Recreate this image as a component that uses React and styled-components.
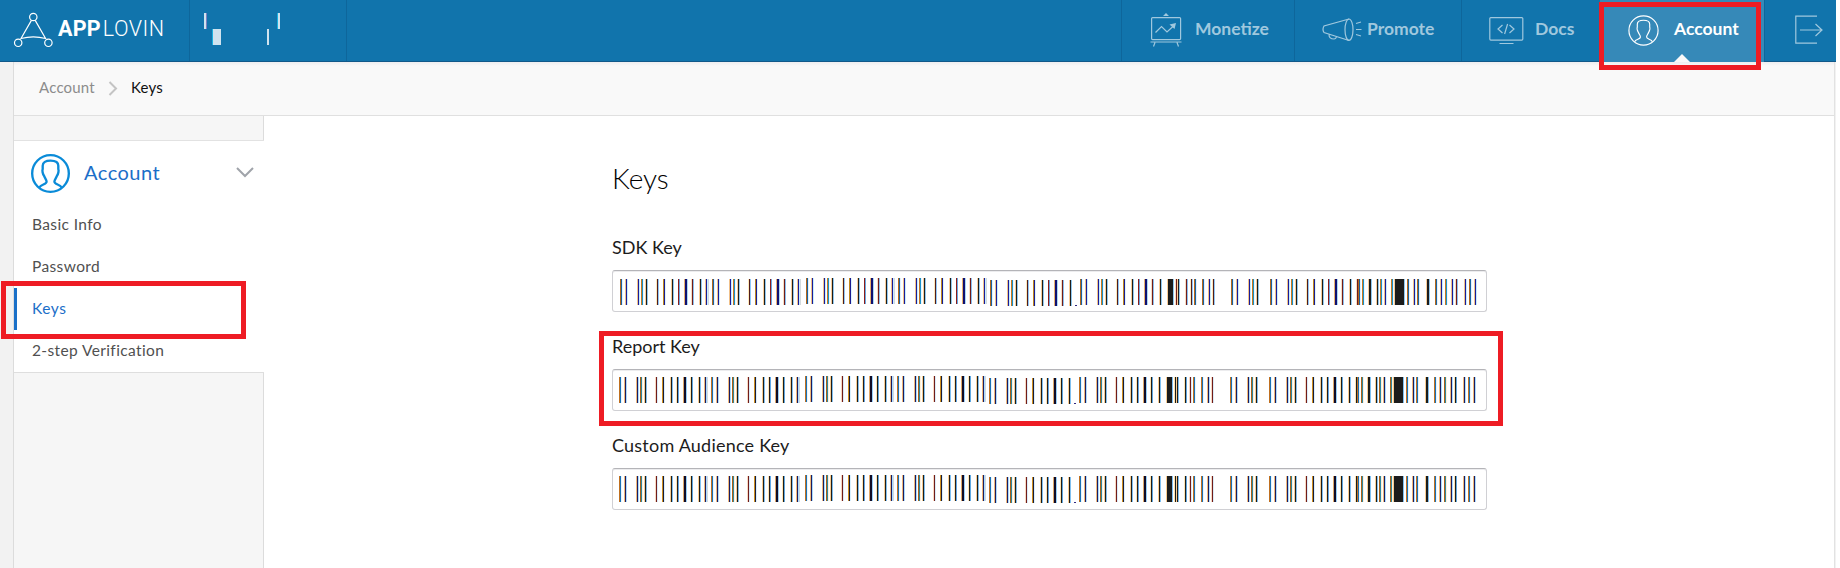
import React from 'react';
import styled, { createGlobalStyle } from 'styled-components';

const GlobalStyle = createGlobalStyle`
  * { box-sizing: border-box; }
  body { margin: 0; background: #fff; font-family: Lato, sans-serif; }
`;

const Page = styled.div`
  position: relative;
  width: 1836px;
  height: 568px;
  overflow: hidden;
  display: flex;
  flex-direction: column;
  background: #f2f2f2;
`;

const TopBar = styled.header`
  display: flex;
  height: 62px;
  flex: none;
  background: #1174ac;
  border-bottom: 1px solid #11598a;
`;

const LogoCell = styled.div`
  width: 190px;
  display: flex;
  align-items: flex-start;
  padding: 12px 0 0 13px;
  border-right: 1px solid #0e669b;
`;

const Wordmark = styled.span`
  font: 300 21.5px/34px Roboto, sans-serif;
  color: #fff;
  margin-left: 5px;
  letter-spacing: 0.5px;
  b { font-weight: 700; letter-spacing: 0.2px; margin-right: 2px; }
`;

const UserCell = styled.div`
  width: 157px;
  padding: 13px 0 0 14px;
  border-right: 1px solid #0e669b;
`;

const Nav = styled.nav`
  display: flex;
  margin-left: auto;
`;

const NavItem = styled.a`
  position: relative;
  display: flex;
  width: ${(p) => p.$w}px;
  height: ${(p) => (p.$active ? 62 : 61)}px;
  padding-left: ${(p) => p.$pad}px;
  border-left: 1px solid ${(p) => (p.$active ? '#3689b8' : '#0e669b')};
  background: ${(p) => (p.$active ? '#3689b8' : 'transparent')};
  color: ${(p) => (p.$active ? '#fff' : '#a0c8de')};
  svg { flex: none; }
`;

const NavLabel = styled.span`
  font-size: 17.5px;
  font-weight: 700;
  line-height: 24px;
  margin: 17px 0 0 ${(p) => p.$gap}px;
  white-space: nowrap;
`;

const Pointer = styled.i`
  position: absolute;
  left: 73px;
  bottom: 0;
  border: 8px solid transparent;
  border-top: 0;
  border-bottom-color: #f9f9f9;
`;

const Avatar = styled.span`
  flex: none;
  height: ${(p) => p.$size}px;
  margin-top: ${(p) => p.$top || 0}px;
  color: ${(p) => p.$color || 'inherit'};
  svg { display: block; }
`;

const Frame = styled.div`
  flex: 1;
  display: flex;
  flex-direction: column;
  margin: 0 1px 0 13px;
  border-left: 1px solid #dcdcdc;
  border-right: 1px solid #e2e2e2;
  background: #fff;
`;

const Breadcrumb = styled.div`
  display: flex;
  align-items: center;
  height: 54px;
  flex: none;
  padding: 0 0 3px 25px;
  background: linear-gradient(#eeeef0, #f9f9f9 4px);
  border-bottom: 1px solid #e0e0e0;
  font-size: 15px;
  line-height: 20px;
  letter-spacing: 0.2px;
  color: #8c8c8c;
  svg { margin: 3px 13px 0 13px; }
  strong { font-weight: 400; color: #111; }
`;

const Body = styled.div`
  flex: 1;
  display: flex;
`;

const Sidebar = styled.aside`
  width: 250px;
  display: flex;
  flex-direction: column;
`;

const Filler = styled.div`
  height: ${(p) => (p.$h ? p.$h + 'px' : 'auto')};
  flex: ${(p) => (p.$h ? 'none' : 1)};
  background: #f6f6f6;
  border-right: 1px solid #dcdcdc;
`;

const Menu = styled.div`
  height: 233px;
  flex: none;
  border-top: 1px solid #e2e2e2;
  border-bottom: 1px solid #dedede;
  background: #fff;
`;

const MenuHead = styled.div`
  display: flex;
  height: 63px;
  padding: 13px 0 0 17px;
  color: #1b6ec8;
  font-size: 20px;
  line-height: 36px;
`;

const MenuTitle = styled.span`
  width: 166px;
  padding-left: 14px;
  letter-spacing: 0.5px;
`;

const MenuItem = styled.a`
  display: block;
  height: 42px;
  line-height: 41px;
  padding-left: ${(p) => (p.$active ? 15 : 18)}px;
  border-left: ${(p) => (p.$active ? '3px solid #1a70c8' : '0')};
  font-size: 15.5px;
  color: ${(p) => (p.$active ? '#1b6ec8' : '#505050')};
  letter-spacing: ${(p) => (p.$active ? 0.6 : 0.38)}px;
`;

const Main = styled.main`
  padding: 42px 0 0 348px;
  width: 1223px;
`;

const Title = styled.h1`
  margin: 0 0 37px;
  font-size: 28px;
  font-weight: 300;
  line-height: 40px;
  color: #000;
`;

const Field = styled.div`
  height: 99px;
`;

const Label = styled.label`
  display: block;
  height: 35px;
  font-size: 18px;
  line-height: 25px;
  color: #1c1c1c;
  letter-spacing: ${(p) => p.$ls || 0}px;
`;

const KeyBox = styled.div`
  height: 42px;
  padding: ${(p) => p.$inset}px 0 0 ${(p) => p.$inset}px;
  border: 1px solid #d0d0d4;
  border-top-color: #b4b4b8;
  border-radius: 3px;
  box-shadow: inset 0 1px 0 #ececee;
  svg { display: block; }
`;

const Highlight = styled.div`
  position: absolute;
  left: ${(p) => p.$x}px;
  top: ${(p) => p.$y}px;
  width: ${(p) => p.$w}px;
  height: ${(p) => p.$h}px;
  border: 5px solid #ee1c24;
`;

// Stripe palettes: [left fringe, core, right fringe]
const PALETTES = {
  warm: {
    o: ['#b5671a', '#1c62a0', '#dff2ff'],
    n: ['#f0c088', '#1c1c98', '#c4ecff'],
    t: ['#c87820', '#1c90c8', '#e8f8ff'],
    k: ['#f8cc98', '#1c1c1c', '#90c8f0'],
    p: ['#ffe8b8', '#501c1c', '#90c8f8'],
    g: ['#c08820', '#1c1c90', '#dcf4ff'],
    r: ['#ffffff', '#8c1c1c', '#68a8e0'],
    m: ['#f8dcc0', '#701c1c', '#88c0f0'],
    w: ['#e8b070', '#101070', '#a8d8f8'],
  },
  cool: {
    o: ['#c07020', '#1c70b4', '#e4f6ff'],
    n: ['#f0b878', '#1c1c60', '#a8dcff'],
    t: ['#a86018', '#3088a0', '#fff0d8'],
    k: ['#f8cc90', '#1c1c1c', '#80c0f0'],
    p: ['#f8d8c0', '#701c1c', '#d8ecf8'],
    g: ['#d09020', '#1c1c38', '#d8f0ff'],
    r: ['#ffe4b0', '#281c1c', '#60a8e8'],
    m: ['#ffe4b0', '#1c1c1c', '#60a8e0'],
    w: ['#e0a868', '#100c28', '#98d0f8'],
  },
};

const GROUP = [[0, 'o'], [5, 'n'], [17, 'n'], [21, 't'], [25, 'k'], [36, 'p'], [43, 'g'], [51, 'k'], [57, 'r'], [64, 'w', 2], [71, 'm'], [79, 'k'], [85, 'n']];
const STARTS = [[0, 1], [92, 1], [186, 0], [278, 0], [370, 2, 12], [460, 1, 12]];
const TAIL = [
  [547, 'k', 5], [555, 'm'], [557, 'k'],
  [565, 'm'], [570, 'p'], [574, 'o'], [582, 'o'], [588, 'n'], [592, 'p'], [611, 'o'], [616, 'n'],
  [628, 'n'], [632, 't'], [636, 'k'], [650, 'o'], [655, 'n'], [667, 'n'], [671, 't'], [675, 'k'],
  [686, 'p'], [693, 'g'], [701, 'k'], [707, 'r'], [714, 'w', 2], [721, 'm'], [729, 'k'],
  [736, 'm'], [738, 'o'], [742, 't'], [748, 'k', 2], [756, 'k'], [760, 't'], [764, 'n'],
  [771, 't'], [774, 'k', 9], [787, 'o'], [793, 'n'], [797, 'o'], [806, 'k', 2], [815, 'o'],
  [820, 'n'], [825, 't'], [831, 'n'], [835, 'm'], [844, 'n'], [849, 'o'], [854, 'n'],
];

function Stripe({ x, y, kind, core = 1, palette }) {
  const [a, b, c] = palette[kind];
  return (
    <g>
      <rect x={x} y={y} width="1" height="26" fill={a} />
      <rect x={x + 1} y={y} width={core} height="26" fill={b} />
      <rect x={x + 1 + core} y={y} width="1" height="26" fill={c} />
    </g>
  );
}

function KeyStripes({ tone }) {
  const palette = PALETTES[tone];
  return (
    <svg width="862" height="29" shapeRendering="crispEdges">
      {STARTS.map(([sx, sy, count = 13]) =>
        GROUP.slice(0, count).map(([x, kind, core]) => (
          <Stripe key={sx + x} x={sx + x} y={sy} kind={kind} core={core} palette={palette} />
        ))
      )}
      {[88, 180, 274, 366].map((x) => (
        <rect key={x} x={x} y={x > 200 ? 0 : 1} width="1" height="26" fill="#d4dade" />
      ))}
      <rect x="455" y="27" width="2" height="1" fill="#302880" />
      {TAIL.map(([x, kind, core]) => (
        <Stripe key={x} x={x} y={1} kind={kind} core={core} palette={palette} />
      ))}
    </svg>
  );
}

const Person = ({ size, sw }) => (
  <svg width={size} height={size} viewBox="0 0 40 40" fill="none" stroke="currentColor" strokeWidth={sw}>
    <circle cx="20" cy="20" r="18.8" />
    <path d="M8.500 34.500C10 31 15.800 31.500 16 28.500C16.100 26.500 14.200 25 13.200 22C12 20.500 11.300 17 12 15.500V12C12 8.500 15 6.800 20 6.800C25 6.800 28 8.500 28 12V15.500C28.700 17 28 20.500 26.800 22C25.800 25 23.900 26.500 24 28.500C24.200 31.500 30 31 31.500 34.500" />
  </svg>
);

const KeyField = ({ label, tone, inset, ls }) => (
  <Field>
    <Label $ls={ls}>{label}</Label>
    <KeyBox $inset={inset}><KeyStripes tone={tone} /></KeyBox>
  </Field>
);

export default function App() {
  return (
    <Page>
      <GlobalStyle />
      <TopBar>
        <LogoCell>
          <svg width="40" height="36" fill="none" stroke="#fff" strokeWidth="1.2">
            <circle cx="20.3" cy="5" r="3.7" />
            <circle cx="5.2" cy="30.8" r="3.7" />
            <circle cx="35.4" cy="30.8" r="3.7" />
            <path d="M18.4 8.400L8 26.500Q20.300 23.400 32.600 26.500L22.200 8.400" />
          </svg>
          <Wordmark><b>APP</b>LOVIN</Wordmark>
        </LogoCell>
        <UserCell>
          <svg width="90" height="34" shapeRendering="crispEdges">
            <path fill="#d0e3ef" d="M0 0h2v16h-2zM9 16h8v16h-8zM74 0h2v16h-2zM63 16h2v16h-2z" />
            <path fill="#7c80c0" d="M2 0h1v16h-1z" />
            <path fill="#18b0e0" d="M8 16h1v16h-1zM73 0h1v16h-1z" />
          </svg>
        </UserCell>
        <Nav>
          <NavItem $w={173} $pad={28}>
            <svg width="32" height="48" fill="none" stroke="currentColor" strokeWidth="1.2">
              <rect x="1.6" y="17.6" width="29" height="22" rx="1" />
              <path d="M0.500 42h31M5 42.500l-1.500 4M27 42.500l1.500 4M5.500 32.500l6-6 5.500 5.500 7-6.500" />
              <path fill="currentColor" stroke="none" d="M13 16l3-3 3 3zM19.500 24.500l6.500-1.500-1.500 6z" />
            </svg>
            <NavLabel $gap={13}>Monetize</NavLabel>
          </NavItem>
          <NavItem $w={167} $pad={26}>
            <svg width="42" height="48" fill="none" stroke="currentColor" strokeWidth="1.2">
              <path d="M28 19L3 26Q1 29.500 3 32.500L28 40.500M8 34.500q0 4.500 5 4.500q2 0 2.500-2.500M35 23.500l5-1.500M35 29.500h5.500M35 34.500l5 1.500" />
              <ellipse cx="28" cy="29.700" rx="4" ry="10.700" />
            </svg>
            <NavLabel $gap={4}>Promote</NavLabel>
          </NavItem>
          <NavItem $w={139} $pad={27}>
            <svg width="36" height="48" fill="none" stroke="currentColor" strokeWidth="1.2">
              <rect x="0.800" y="17.600" width="33" height="22.500" rx="1" />
              <path d="M10.500 43.500h14M13.500 25l-4.500 4 4.500 4M20.500 25l4.500 4-4.500 4M18.600 24l-3 10" />
            </svg>
            <NavLabel $gap={10}>Docs</NavLabel>
          </NavItem>
          <NavItem $w={164} $pad={27} $active>
            <Avatar $size={31} $top={15}><Person size={31} sw={1.5} /></Avatar>
            <NavLabel $gap={15}>Account</NavLabel>
            <Pointer />
          </NavItem>
          <NavItem $w={72} $pad={30}>
            <svg width="30" height="48" fill="none" stroke="currentColor" strokeWidth="1.2">
              <path d="M22 16.200H0.800V43.200H22M5 30h21.500M20.500 24l6.500 6-6.500 6" />
            </svg>
          </NavItem>
        </Nav>
      </TopBar>
      <Frame>
        <Breadcrumb>
          Account
          <svg width="10" height="15" fill="none" stroke="#c4c4c4" strokeWidth="2"><path d="M1.500 1l6.500 6.500-6.500 6.500" /></svg>
          <strong>Keys</strong>
        </Breadcrumb>
        <Body>
          <Sidebar>
            <Filler $h={24} />
            <Menu>
              <MenuHead>
                <Avatar $size={39} $color="#0a8bd8"><Person size={39} sw={2.4} /></Avatar>
                <MenuTitle>Account</MenuTitle>
                <svg width="18" height="40" fill="none" stroke="#a0a4aa" strokeWidth="2"><path d="M1 14l8 8 8-8" /></svg>
              </MenuHead>
              <MenuItem>Basic Info</MenuItem>
              <MenuItem>Password</MenuItem>
              <MenuItem $active>Keys</MenuItem>
              <MenuItem>2-step Verification</MenuItem>
            </Menu>
            <Filler />
          </Sidebar>
          <Main>
            <Title>Keys</Title>
            <KeyField label="SDK Key" tone="warm" inset={7} />
            <KeyField label="Report Key" tone="cool" inset={6} />
            <KeyField label="Custom Audience Key" tone="cool" inset={6} ls={0.22} />
          </Main>
        </Body>
      </Frame>
      <Highlight $x={1599} $y={2} $w={162} $h={68} />
      <Highlight $x={1} $y={281} $w={245} $h={58} />
      <Highlight $x={599} $y={331} $w={904} $h={95} />
    </Page>
  );
}
